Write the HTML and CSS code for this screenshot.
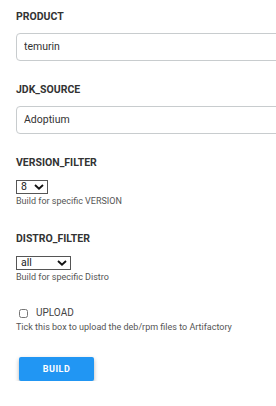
FILE: index.html
```html
<!DOCTYPE html>
<html>
<head>
<meta charset="utf-8">
<link rel="stylesheet" href="styles.css">
</head>
<body>
<form class="form">
  <div class="field field-text">
    <label class="label">PRODUCT</label>
    <input class="text-input" type="text" value="temurin">
  </div>
  <div class="field field-text">
    <label class="label">JDK_SOURCE</label>
    <input class="text-input" type="text" value="Adoptium">
  </div>
  <div class="field field-choice">
    <label class="label">VERSION_FILTER</label>
    <div class="select-wrap">
      <select class="choice choice-version"><option>8</option></select>
      <svg class="chev" width="10" height="6" viewBox="0 0 10 6"><path d="M1 1 L5 4.6 L9 1" fill="none" stroke="#111" stroke-width="1.9"/></svg>
    </div>
    <div class="desc">Build for specific VERSION</div>
  </div>
  <div class="field field-choice">
    <label class="label">DISTRO_FILTER</label>
    <div class="select-wrap">
      <select class="choice choice-distro"><option>all</option></select>
      <svg class="chev" width="10" height="6" viewBox="0 0 10 6"><path d="M1 1 L5 4.6 L9 1" fill="none" stroke="#111" stroke-width="1.9"/></svg>
    </div>
    <div class="desc">Build for specific Distro</div>
  </div>
  <div class="field field-bool">
    <label class="check-row"><input class="check" type="checkbox"><span class="check-label">UPLOAD</span></label>
    <div class="desc">Tick this box to upload the deb/rpm files to Artifactory</div>
  </div>
  <div class="actions">
    <button type="button" class="build-btn">BUILD</button>
  </div>
</form>
</body>
</html>
```

FILE: styles.css
```css
html, body {
  margin: 0;
  padding: 0;
  background: #fff;
  overflow: hidden;
}
body {
  font-family: Roboto, "Liberation Sans", sans-serif;
  color: #333;
}
.form {
  width: 330px;
  padding: 0 0 0 16px;
  display: flex;
  flex-direction: column;
}
.label {
  display: block;
  font-weight: 700;
  font-size: 10.5px;
  line-height: 12px;
  color: #333;
}
.field-text {
  display: flex;
  flex-direction: column;
  gap: 10px;
}
.field-text:first-child { margin-top: 11px; }
.field-text + .field-text { margin-top: 23px; }
.text-input {
  box-sizing: border-box;
  height: 28px;
  width: 100%;
  border: 1px solid #c8ccce;
  border-radius: 4px;
  padding: 0 7px 1px;
  margin: 0;
  font-family: Roboto, "Liberation Sans", sans-serif;
  font-size: 10.5px;
  color: #333;
  outline: none;
}
.field-choice {
  display: flex;
  flex-direction: column;
  align-items: flex-start;
}
.field-text + .field-choice { margin-top: 23px; }
.field-choice + .field-choice { margin-top: 26px; }
.field-choice .label { margin-bottom: 11px; }
.select-wrap {
  position: relative;
  display: flex;
}
.choice {
  -webkit-appearance: none;
  appearance: none;
  box-sizing: border-box;
  height: 14px;
  margin: 0;
  padding: 0 0 0 4px;
  font-family: Roboto, "Liberation Sans", sans-serif;
  font-size: 10.5px;
  line-height: 12px;
  color: #222;
  border: 1px solid #555;
  border-radius: 0;
  background: #fff;
  outline: none;
}
.choice-version { width: 32px; }
.choice-distro { width: 55px; }
.chev {
  position: absolute;
  right: 4px;
  top: 4px;
  pointer-events: none;
}
.desc {
  font-size: 9px;
  line-height: 11px;
  color: #555;
  margin-top: 2px;
}
.field-bool {
  margin-top: 24px;
  display: flex;
  flex-direction: column;
}
.check-row {
  display: flex;
  align-items: center;
  gap: 8px;
  padding-left: 3px;
}
.check {
  width: 9px;
  height: 9px;
  margin: 0;
}
.check-label {
  font-size: 10px;
  line-height: 12px;
  color: #444;
}
.field-bool .desc { margin-top: 3px; }
.actions {
  margin-top: 24px;
  padding-left: 3px;
}
.build-btn {
  width: 75px;
  height: 24px;
  border: none;
  border-radius: 2px;
  background: #2196f3;
  color: #fff;
  font-family: Roboto, "Liberation Sans", sans-serif;
  font-weight: 700;
  font-size: 9px;
  letter-spacing: 0.5px;
  box-shadow: 0 2px 4px rgba(0,0,0,0.3);
  padding: 0;
}
```
